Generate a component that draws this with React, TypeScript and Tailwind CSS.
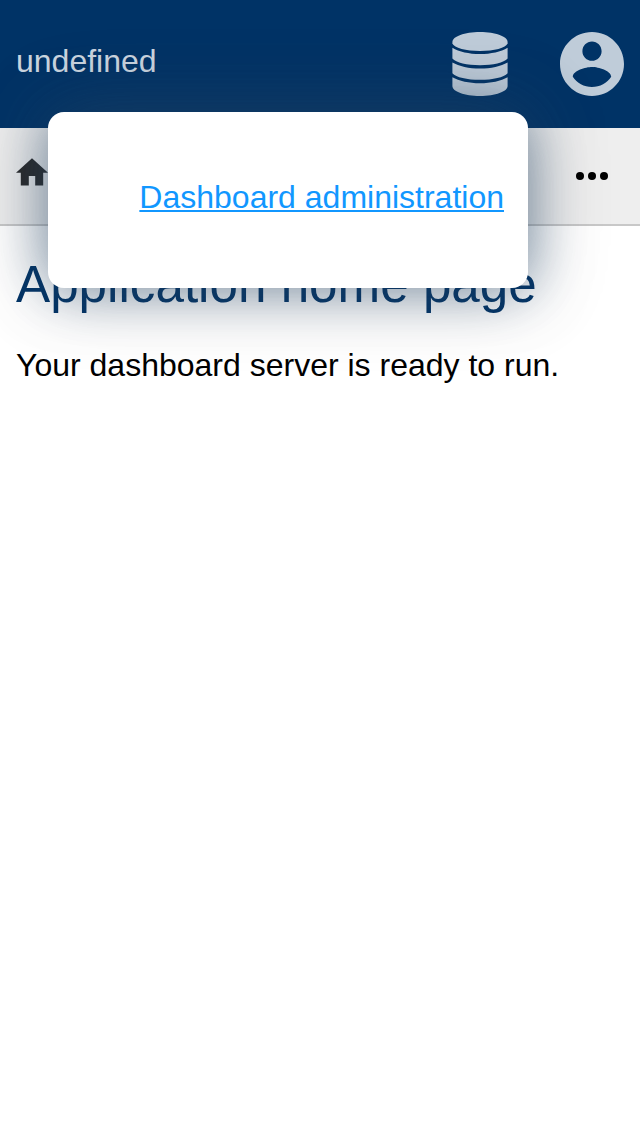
function DatabaseIcon() {
  return (
    <svg viewBox="0 0 56 64" className="h-16 w-14 fill-current">
      <path d="M.4 10C.4 4.500 12.500 0 28 0s27.600 4.500 27.600 10v1.500C54 16 42 19 28 19S2 16 .4 11.500z" />
      <path d="M.4 15.700C7 19.700 17 22 28 22s21-2.300 27.600-6.300v10.800C52 30.700 41 33.200 28 33.200S4 30.700.4 26.500z" />
      <path d="M.4 30.500C7 34.200 17 36.600 28 36.600s21-2.400 27.600-6.100v10.700C52 45.400 41 47.800 28 47.800S4 45.400.4 41.200z" />
      <path d="M.4 45.200C7 48.900 17 51.200 28 51.200s21-2.300 27.600-6V54c0 5.500-12.100 10-27.600 10S.4 59.500.4 54z" />
    </svg>
  );
}

function AccountIcon() {
  return (
    <svg viewBox="2 2 20 20" className="size-16 fill-current">
      <path d="M12 2C6.480 2 2 6.480 2 12s4.480 10 10 10 10-4.480 10-10S17.520 2 12 2zm0 3c1.660 0 3 1.340 3 3s-1.340 3-3 3-3-1.340-3-3 1.340-3 3-3zm0 14.200c-2.500 0-4.710-1.280-6-3.220.030-1.990 4-3.080 6-3.080 1.990 0 5.970 1.090 6 3.080-1.290 1.940-3.500 3.220-6 3.220z" />
    </svg>
  );
}

function HomeIcon() {
  return (
    <svg viewBox="2 2.800 20 17.500" className="-mt-2 h-7 w-8 fill-[#292929]">
      <path d="M10 20v-6h4v6h5v-8h3L12 3 2 12h3v8z" />
    </svg>
  );
}

function Menu() {
  return (
    <div className="absolute top-28 left-12 flex h-44 w-[480px] items-center justify-end rounded-2xl bg-white px-6 shadow-[0_0_80px_rgba(85,85,85,0.3),0_0_56px_rgba(0,51,102,0.5)]">
      <a href="#" className="-mt-1.5 leading-9 text-[#1197ff] underline decoration-2 underline-offset-2">
        Dashboard administration
      </a>
    </div>
  );
}

export default function App() {
  return (
    <div className="relative min-h-[1136px] w-full overflow-hidden bg-white font-['Liberation_Sans',Arial,sans-serif] text-[32px] text-black">
      <header className="flex h-32 items-center justify-between bg-[#003366] px-4">
        <span className="-mt-1.5 leading-9 text-[#ccd6e0]">undefined</span>
        <div className="flex items-center gap-[52px] text-[#bfccd9]">
          <DatabaseIcon />
          <AccountIcon />
        </div>
      </header>
      <nav className="flex h-[98px] items-center justify-between border-b-2 border-[#c8c8c8] bg-[#eee] pr-8 pl-4">
        <HomeIcon />
        <svg viewBox="0 0 32 8" className="h-2 w-8 fill-black">
          <circle cx="4" cy="4" r="4" />
          <circle cx="16" cy="4" r="4" />
          <circle cx="28" cy="4" r="4" />
        </svg>
      </nav>
      <main className="px-4 pt-[29px]">
        <h1 className="text-[51.2px] leading-[60px] text-[#003366]">Application home page</h1>
        <p className="mt-8 leading-9">Your dashboard server is ready to run.</p>
      </main>
      <Menu />
    </div>
  );
}
